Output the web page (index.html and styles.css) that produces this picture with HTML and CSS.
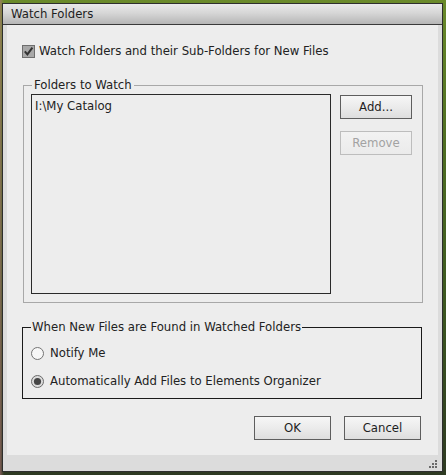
FILE: index.html
```html
<!DOCTYPE html>
<html>
<head>
<meta charset="utf-8">
<title>Watch Folders</title>
<link rel="stylesheet" href="styles.css">
</head>
<body>
<div class="dialog">
  <div class="titlebar">Watch Folders</div>
  <div class="frame">
    <div class="panel">
      <label class="check-row">
        <svg class="checkbox" width="13" height="13" viewBox="0 0 13 13">
          <rect x="0.5" y="0.5" width="12" height="12" fill="#a8a8a8" stroke="#6e6e6e"/>
          <path d="M2.8 6.4 L5.4 9.4 L10.4 2.6" fill="none" stroke="#333" stroke-width="2"/>
        </svg>
        <span>Watch Folders and their Sub-Folders for New Files</span>
      </label>

      <fieldset class="group group-folders">
        <legend>Folders to Watch</legend>
        <div class="folders-body">
          <div class="listbox">
            <div class="list-item">I:\My Catalog</div>
          </div>
          <div class="side-buttons">
            <button class="btn">Add...</button>
            <button class="btn disabled">Remove</button>
          </div>
        </div>
      </fieldset>

      <fieldset class="group group-action">
        <legend>When New Files are Found in Watched Folders</legend>
        <div class="action-body">
          <label class="radio-row">
            <svg width="13" height="13" viewBox="0 0 13 13">
              <circle cx="6.5" cy="6.5" r="6" fill="#f7f7f7" stroke="#747474"/>
            </svg>
            <span>Notify Me</span>
          </label>
          <label class="radio-row">
            <svg width="13" height="13" viewBox="0 0 13 13">
              <circle cx="6.5" cy="6.5" r="6" fill="#dcdcdc" stroke="#6a6a6a"/>
              <circle cx="6.5" cy="6.5" r="3.6" fill="#454545"/>
            </svg>
            <span>Automatically Add Files to Elements Organizer</span>
          </label>
        </div>
      </fieldset>

      <div class="footer-buttons">
        <button class="btn wide">OK</button>
        <button class="btn wide">Cancel</button>
      </div>
    </div>
    <div class="grip-row">
      <svg class="grip" width="10" height="9" viewBox="0 0 10 9">
        <rect x="7" y="0" width="2" height="2" fill="#6a6a6a"/>
        <rect x="4" y="3" width="2" height="2" fill="#6a6a6a"/>
        <rect x="7" y="3" width="2" height="2" fill="#6a6a6a"/>
        <rect x="1" y="6" width="2" height="2" fill="#6a6a6a"/>
        <rect x="4" y="6" width="2" height="2" fill="#6a6a6a"/>
        <rect x="7" y="6" width="2" height="2" fill="#6a6a6a"/>
      </svg>
    </div>
  </div>
</div>
</body>
</html>
```

FILE: styles.css
```css
* { box-sizing: border-box; }

html, body {
  margin: 0;
  padding: 0;
  width: 446px;
  height: 475px;
  overflow: hidden;
}

body {
  background:
    linear-gradient(90deg, rgba(190,120,130,0.55) 0px, rgba(190,120,130,0) 4px),
    linear-gradient(180deg, #6a8a2a 0px, #4f6e22 30%, #3e5a20 60%, #2e3a22 100%);
  font-family: "DejaVu Sans Condensed", "DejaVu Sans", sans-serif;
  font-size: 13px;
  color: #222;
  padding: 3px 0 0 2px;
}

.dialog {
  width: 441px;
  height: 469px;
  border: 1px solid #2e2e2e;
  background: #dcdcdc;
  display: flex;
  flex-direction: column;
}

.titlebar {
  height: 21px;
  line-height: 20px;
  padding-left: 8px;
  background: linear-gradient(180deg, #e9e9e9 0%, #d6d6d6 45%, #b6b6b6 100%);
  border-bottom: 1px solid #3a3a3a;
  color: #1e1e1e;
  flex: none;
}

.frame {
  flex: 1;
  padding: 0 4px 0 4px;
  display: flex;
  flex-direction: column;
}

.panel {
  height: 430px;
  background: #ededed;
  padding: 18px 0 0 15px;
  display: flex;
  flex-direction: column;
  align-items: flex-start;
}

.check-row {
  display: flex;
  align-items: center;
  height: 16px;
  line-height: 16px;
  gap: 4px;
  white-space: nowrap;
}

.checkbox { display: block; flex: none; }

.group {
  margin: 0;
  padding: 0;
  width: 400px;
  min-width: 0;
}

.group legend {
  line-height: 16px;
  height: 16px;
  margin-left: 8px;
  white-space: nowrap;
}

.group-folders {
  margin-top: 18px;
  margin-left: 1px;
  border: 1px solid #a8a8a8;
}

.group-folders legend { padding: 0 2px; }

.folders-body {
  display: flex;
  align-items: flex-start;
  padding: 1px 0 8px 7px;
  gap: 9px;
}

.listbox {
  width: 300px;
  height: 200px;
  border: 1px solid #2a2a2a;
  background: #ededed;
  padding: 3px 3px;
  flex: none;
}

.list-item {
  line-height: 16px;
  white-space: nowrap;
}

.side-buttons {
  display: flex;
  flex-direction: column;
  gap: 12px;
  margin-top: 1px;
}

.btn {
  font-family: inherit;
  font-size: 13px;
  color: #1e1e1e;
  width: 72px;
  height: 24px;
  padding: 0;
  border: 1px solid #5e5e5e;
  border-radius: 0;
  background: linear-gradient(180deg, #f6f6f6 0%, #ebebeb 50%, #dedede 100%);
  line-height: 22px;
  text-align: center;
}

.btn.disabled {
  color: #a2a2a2;
  border-color: #bdbdbd;
  background: linear-gradient(180deg, #f2f2f2 0%, #ebebeb 100%);
}

.btn.wide { width: 77px; }

.group-action {
  margin-top: 16px;
  border: 1px solid #1a1a1a;
}

.group-action legend { padding: 0 1px; }

.action-body {
  display: flex;
  flex-direction: column;
  gap: 12px;
  padding: 10px 0 9px 8px;
}

.radio-row {
  display: flex;
  align-items: center;
  height: 16px;
  line-height: 16px;
  gap: 6px;
  white-space: nowrap;
}

.radio-row svg { display: block; flex: none; }

.footer-buttons {
  display: flex;
  gap: 13px;
  margin-top: 17px;
  margin-left: 232px;
}

.grip-row {
  flex: 1;
  display: flex;
  justify-content: flex-end;
  align-items: flex-end;
  padding: 0 0 2px 0;
}

.grip { display: block; }
```
